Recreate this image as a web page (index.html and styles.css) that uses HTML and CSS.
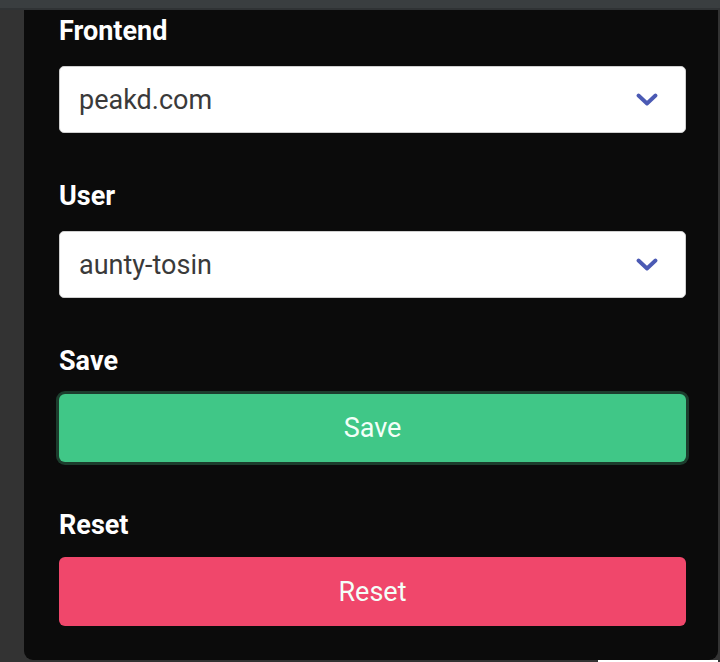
FILE: index.html
```html
<!DOCTYPE html>
<html>
<head>
<meta charset="utf-8">
<link rel="stylesheet" href="styles.css">
</head>
<body>
<div class="topbar"></div>
<div class="main">
  <div class="panel">
    <div class="field">
      <div class="label">Frontend</div>
      <div class="select">
        <span class="value">peakd.com</span>
        <svg class="chev" width="22" height="14" viewBox="0 0 22 14"><path d="M2.5 2.5 L11 10.5 L19.5 2.5" fill="none" stroke="#4b5ab4" stroke-width="3.8" stroke-linecap="round" stroke-linejoin="round"/></svg>
      </div>
    </div>
    <div class="field">
      <div class="label">User</div>
      <div class="select">
        <span class="value">aunty-tosin</span>
        <svg class="chev" width="22" height="14" viewBox="0 0 22 14"><path d="M2.5 2.5 L11 10.5 L19.5 2.5" fill="none" stroke="#4b5ab4" stroke-width="3.8" stroke-linecap="round" stroke-linejoin="round"/></svg>
      </div>
    </div>
    <div class="field">
      <div class="label">Save</div>
      <button class="btn btn-save">Save</button>
    </div>
    <div class="field field-last">
      <div class="label">Reset</div>
      <button class="btn btn-reset">Reset</button>
    </div>
  </div>
</div>
<div class="bottom"><div class="bottom-fill"></div><div class="bottom-white"></div></div>
</body>
</html>
```
FILE: styles.css
```css
* { box-sizing: border-box; }
html, body { margin: 0; padding: 0; }
body {
  background: #333333;
  font-family: Roboto, "Noto Sans", "Liberation Sans", sans-serif;
  width: 720px;
  height: 662px;
  overflow: hidden;
}
.topbar {
  height: 10px;
  background: #3a3e40;
  border-bottom: 2px solid #303335;
}
.main {
  padding-left: 24px;
  padding-right: 2px;
}
.panel {
  background: #0b0b0b;
  height: 650px;
  border-radius: 0 0 9px 9px;
  padding: 5px 32px 0 35px;
}
.field { margin-bottom: 47px; }
.field-last { margin-bottom: 0; }
.label {
  color: #ffffff;
  font-weight: 700;
  font-size: 27px;
  line-height: 32px;
  margin-bottom: 19px;
}
.select {
  height: 67px;
  background: #ffffff;
  border: 1px solid #cfcfcf;
  border-radius: 5px;
  display: flex;
  align-items: center;
  justify-content: space-between;
  padding: 0 27px 0 19px;
}
.value {
  color: #3a3a3a;
  font-size: 27px;
}
.chev { display: block; }
.btn {
  display: block;
  width: 100%;
  border: none;
  border-radius: 6px;
  font-family: Roboto, "Noto Sans", "Liberation Sans", sans-serif;
  font-size: 27px;
  color: #f4fff8;
  padding: 0;
}
.btn-save {
  height: 68px;
  margin-top: -2px;
  background: #40c787;
  box-shadow: 0 0 0 3px #1c3d2d;
}
.btn-reset {
  height: 69px;
  margin-top: -3px;
  background: #f0476b;
}
.bottom {
  display: flex;
  height: 2px;
}
.bottom-fill { flex: 1; background: #333333; }
.bottom-white { width: 120px; background: #ffffff; margin-right: 2px; }
```
